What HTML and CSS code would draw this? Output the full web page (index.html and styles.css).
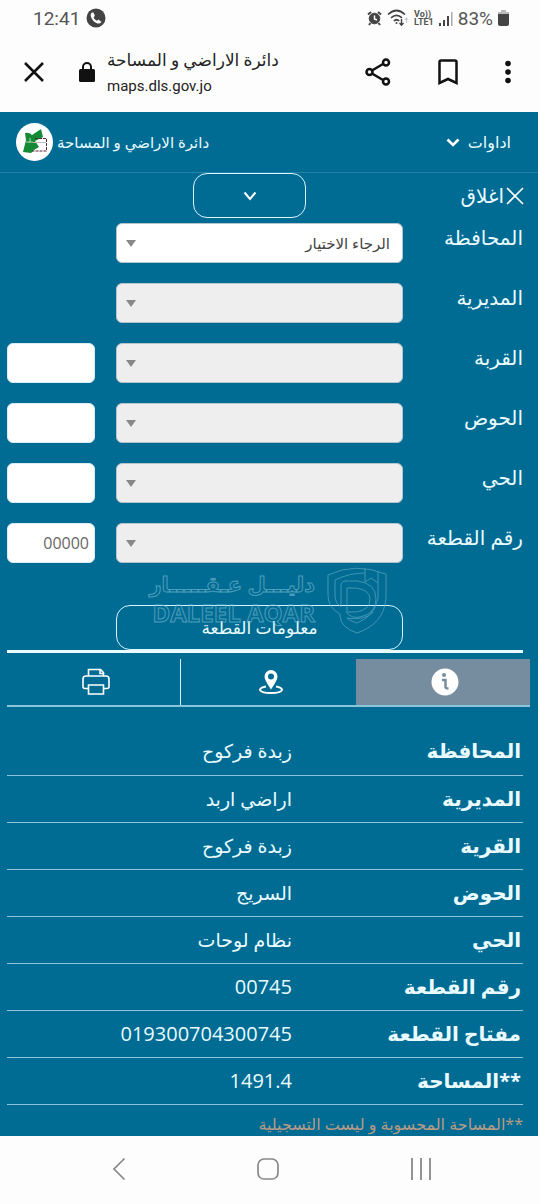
FILE: index.html
```html
<!DOCTYPE html>
<html lang="ar">
<head>
<meta charset="utf-8">
<meta name="viewport" content="width=device-width, initial-scale=1">
<title>دائرة الاراضي و المساحة</title>
<link rel="stylesheet" href="styles.css">
</head>
<body>
<div class="status">
  <div class="group">
    <span class="clock">12:41</span>
    <svg width="20" height="20" viewBox="0 0 20 20"><circle cx="10" cy="10" r="9.5" fill="#444"/><path d="M6 4.500Q4 6 5 9q2 5 6.500 6.500 2.500.5 4-1.500l-3-2.500-1.600 1.200q-2.400-1.200-3.300-3.300L8.800 7.800 7.500 4.500z" fill="#fff"/></svg>
  </div>
  <div class="group indicators">
    <svg width="15" height="16" viewBox="0 0 15 16" fill="none" stroke="#444"><circle cx="7.500" cy="8.500" r="5.300" fill="#444"/><path d="M1 4.500 4 2M14 4.500 11 2M3.500 13 2 15M11.500 13l1.500 2" stroke-width="2"/><path d="M7.500 5.500v3.500l2.500 1" stroke="#fff" stroke-width="1.500"/></svg>
    <svg width="22" height="18" viewBox="0 0 22 18" fill="none" stroke="#444" stroke-width="1.700"><path d="M1 5.500q8.500-8 17 0M4 8.800q5.500-5 11 0M6.800 12q2.700-2.500 5.400 0"/><circle cx="9.500" cy="14" r="1" fill="#444" stroke="none"/><path d="M14.500 10v6m-2-2 2 2.300 2-2.300" stroke-width="1.400"/><path d="M19.500 14v-5m-1.500 2 1.500-2 1.500 2" stroke="#ccc" stroke-width="1.200"/></svg>
    <span class="lte"><span>Vo))</span><span>LTE1</span></span>
    <svg width="14" height="15" viewBox="0 0 14 15"><path d="M0 12h2v3H0zM4 9h2v6H4zM8 5h2v10H8z" fill="#444"/><path d="M12 1h1.500v14H12z" fill="#aaa"/></svg>
    <span class="percent">83%</span>
    <svg width="11" height="16" viewBox="0 0 11 16"><path d="M3 0h5v2h3v3H0V2h3z" fill="#bbb"/><path d="M0 4h11v10q0 2-2 2H2q-2 0-2-2z" fill="#444"/></svg>
  </div>
</div>
<header class="browser">
  <button class="icon" aria-label="إغلاق الصفحة"><svg width="20" height="20" viewBox="0 0 20 20"><path d="M1 1l18 18M19 1 1 19" stroke="#111" stroke-width="2.500"/></svg></button>
  <svg class="lock" width="16" height="20" viewBox="0 0 16 20"><rect y="7" width="16" height="13" rx="1.500" fill="#111"/><path d="M4 8V5a4 4 0 0 1 8 0v3" fill="none" stroke="#111" stroke-width="2"/></svg>
  <div class="address"><span class="page-title" dir="rtl">دائرة الاراضي و المساحة</span><span class="host">maps.dls.gov.jo</span></div>
  <div class="actions">
    <button class="icon" aria-label="مشاركة"><svg width="26" height="28" viewBox="0 0 26 28" fill="none" stroke="#111" stroke-width="2.500"><path d="M7 12.500 18 6M7 15.500 18 22"/><circle cx="4.500" cy="14" r="3"/><circle cx="21" cy="4.500" r="3"/><circle cx="21" cy="23.500" r="3"/></svg></button>
    <button class="icon" aria-label="حفظ"><svg width="20" height="26" viewBox="0 0 20 26"><path d="M1.500 24V3q0-1.500 1.500-1.500h14q1.500 0 1.500 1.500v21L10 20z" fill="none" stroke="#111" stroke-width="2.500"/></svg></button>
    <button class="icon" aria-label="المزيد"><svg width="6" height="24" viewBox="0 0 6 24" fill="#111"><circle cx="3" cy="3.500" r="2.800"/><circle cx="3" cy="12" r="2.800"/><circle cx="3" cy="20.500" r="2.800"/></svg></button>
  </div>
</header>
<main class="app" dir="rtl">
  <div class="topbar">
    <button class="tools">اداوات <svg width="14" height="9" viewBox="0 0 14 9"><path d="M1.500 1.500 7 7l5.500-5.500" fill="none" stroke="#fff" stroke-width="2.600"/></svg></button>
    <div class="brand"><span>دائرة الاراضي و المساحة</span>
      <svg width="37" height="38" viewBox="0 0 37 38"><ellipse cx="18.500" cy="19" rx="18.500" ry="19" fill="#fff"/><path d="M9 10q4-1 7 2l9-6 2 8-8 4 4 6-5 3-3 3-8-1 3-12z" fill="#148a35"/><path d="M10 19h7M14 15v5" stroke="#a8dcb4"/><path d="M19 15.500h11.500V28H16" fill="none" stroke="#522936" stroke-dasharray="3 1"/><path d="M17 19.500h13" stroke="#bbb"/></svg>
    </div>
  </div>
  <div class="closebar">
    <button class="close"><svg width="18" height="18" viewBox="0 0 18 18"><path d="M1 1l16 16M17 1 1 17" stroke="#fff" stroke-width="1.600"/></svg>اغلاق</button>
    <button class="pill" aria-label="طي"><svg width="14" height="10" viewBox="0 0 14 10"><path d="M1.500 1.500 7 8l5.500-6.500" fill="none" stroke="#fff" stroke-width="2"/></svg></button>
  </div>
  <form class="form">
    <div class="row"><label for="gov">المحافظة</label><div class="pick"><select id="gov"><option>الرجاء الاختيار</option></select></div></div>
    <div class="row"><label for="dir">المديرية</label><div class="pick"><select id="dir" disabled></select></div></div>
    <div class="row"><label for="vil">القربة</label><div class="pick"><select id="vil" disabled></select></div><input aria-label="رمز القرية"></div>
    <div class="row"><label for="bas">الحوض</label><div class="pick"><select id="bas" disabled></select></div><input aria-label="رمز الحوض"></div>
    <div class="row"><label for="blk">الحي</label><div class="pick"><select id="blk" disabled></select></div><input aria-label="رمز الحي"></div>
    <div class="row"><label for="par">رقم القطعة</label><div class="pick"><select id="par" disabled></select></div><input aria-label="رقم القطعة" placeholder="00000"></div>
    <div class="submit"><button type="button" class="pill">معلومات القطعة</button>
      <div class="watermark" aria-hidden="true">
        <svg width="60" height="68" viewBox="0 0 60 68" fill="none" stroke="#6fb0c8"><path d="M1 8Q28-5 59 7v24q-2 26-29 35-16-5-17-17v-2Q1 41 1 28zM38 1v14l6-4 7 5V5M38 6Q22 6 8 13v17q0 6 6 10V19q0-5 5-5h11q19 2 19 18 0 15-16 18-8 2-14-5M51 16v15q-3 18-21 25-7-2-10-5 18 3 26-6M20 21v24h9q14-2 14-13 0-9-14-11z"/></svg>
        <div class="mark-text"><span class="mark-ar">دليـــل عـقـــــار</span><span class="mark-en">DALEEL AQAR</span></div>
      </div>
    </div>
  </form>
  <nav class="tabs">
    <button class="tab active" aria-label="معلومات"><svg width="28" height="28" viewBox="0 0 28 28"><circle cx="14" cy="14" r="13.500" fill="#fff"/><circle cx="13" cy="7" r="2" fill="#758d9e"/><path d="M11 12h3.500v7q0 1.500 3 1.500" fill="none" stroke="#758d9e" stroke-width="2.500"/></svg></button>
    <button class="tab" aria-label="الموقع"><svg width="28" height="28" viewBox="0 0 28 28"><path d="M9 18.500Q3 19.500 3 22 4 25 14 25t11-3Q25 19.500 19 18.500" fill="none" stroke="#fff" stroke-width="2"/><path fill-rule="evenodd" d="M14 21.500Q7.500 12 7.500 8.500a6.500 6.500 0 0 1 13 0q0 3.500-6.500 13zM14 5.500a3 3 0 1 0 0 6 3 3 0 0 0 0-6z" fill="#fff"/></svg></button>
    <button class="tab" aria-label="طباعة"><svg width="28" height="28" viewBox="0 0 28 28" fill="none" stroke="#fff" stroke-width="1.600"><path d="M6.500 8V1.500h12l3 3V8M18 2v3.500h3.500M6.500 20.500H3q-2 0-2-2V11q0-3 3-3h20q3 0 3 3v7.500q0 2-2 2h-3.500M6.500 17h15v9h-15z"/></svg></button>
  </nav>
  <table class="info">
    <tr><th scope="row">المحافظة</th><td>زبدة فركوح</td></tr>
    <tr><th scope="row">المديرية</th><td>اراضي اربد</td></tr>
    <tr><th scope="row">القرية</th><td>زبدة فركوح</td></tr>
    <tr><th scope="row">الحوض</th><td>السريج</td></tr>
    <tr><th scope="row">الحي</th><td>نظام لوحات</td></tr>
    <tr><th scope="row">رقم القطعة</th><td class="num">00745</td></tr>
    <tr><th scope="row">مفتاح القطعة</th><td class="num">019300704300745</td></tr>
    <tr><th scope="row">**المساحة</th><td class="num">1491.4</td></tr>
  </table>
  <p class="note">**المساحة المحسوبة و ليست التسجيلية</p>
</main>
<footer class="system">
  <button class="icon" aria-label="رجوع"><svg width="14" height="24" viewBox="0 0 14 24"><path d="M12.500 1.500 2 12l10.500 10.500" fill="none" stroke="#888" stroke-width="1.700"/></svg></button>
  <button class="icon" aria-label="الرئيسية"><svg width="22" height="22" viewBox="0 0 22 22"><rect x="1" y="1" width="20" height="20" rx="6" fill="none" stroke="#888" stroke-width="1.700"/></svg></button>
  <button class="icon" aria-label="التطبيقات"><svg width="22" height="22" viewBox="0 0 22 22"><path d="M2 0v22M11 0v22M20 0v22" stroke="#888" stroke-width="1.800"/></svg></button>
</footer>
</body>
</html>
```
FILE: styles.css
```css
* { box-sizing: border-box; }
body { margin: 0; background: #fdfdfd; color: #222; font-family: Roboto, "DejaVu Sans", sans-serif; }
button { border: 0; padding: 0; background: none; color: inherit; font: inherit; }
svg { display: block; flex: none; }
.status { display: flex; justify-content: space-between; align-items: center; height: 36px; padding: 0 31px 0 33px; color: #555; }
.group { display: flex; align-items: center; gap: 6px; }
.indicators { gap: 5px; }
.clock, .percent { font-size: 19px; }
.lte { display: flex; flex-direction: column; font-size: 9px; line-height: 8px; font-weight: 700; }
.browser { display: flex; align-items: center; height: 76px; padding: 0 29px 4px 24px; }
.lock { margin: 0 12px 0 35px; }
.address { display: flex; flex-direction: column; align-items: flex-start; white-space: nowrap; }
.page-title { font-size: 17px; line-height: 28px; }
.host { font-size: 15px; line-height: 24px; }
.actions { display: flex; align-items: center; gap: 47px; margin-left: auto; }
.app { margin-right: 2px; background: #006c94; color: #e9fbff; font-family: "Open Sans", "DejaVu Sans", sans-serif; overflow: hidden; }
.topbar { display: flex; justify-content: space-between; align-items: center; height: 61px; padding: 0 27px 0 16px; border-bottom: 1px solid #2480a4; font-size: 15px; }
.tools, .brand { display: flex; align-items: center; gap: 4px; }
.tools { gap: 8px; font-size: 16px; }
.closebar { display: grid; grid-template-columns: 1fr 113px 193px; padding-right: 14px; align-items: center; }
.close { display: flex; align-items: center; justify-self: start; gap: 2px; font-size: 20px; line-height: 30px; }
.pill { height: 45px; border: 1px solid #d8f4ff; border-radius: 14px; display: grid; place-items: center; }
.form { padding: 5px 15px 0 7px; border-bottom: 3px solid #e9fbff; }
.form { border-image: linear-gradient(to right, transparent 7px, #e9fbff 7px calc(100% - 15px), transparent calc(100% - 15px)) 0 0 3 0; }
.row { display: grid; grid-template-columns: 120px 1fr 88px; align-items: start; height: 60px; }
.row label { font-size: 20px; line-height: 30px; white-space: nowrap; }
.pick { position: relative; margin-left: 21px; }
.pick::after { content: ""; position: absolute; left: 10px; top: 17px; border: 5px solid transparent; border-top: 7px solid #888; border-bottom: 0; }
select, input { appearance: none; display: block; width: 100%; height: 40px; border: 1px solid #b4c5cc; border-radius: 6px; background: #fff; color: #444; font: 15px "Open Sans", "DejaVu Sans", sans-serif; padding: 0 12px; opacity: 1; }
select:disabled { background: #eee; opacity: 1; }
input { border-color: #d9ecf4; padding: 0 5px; font-size: 16px; }
input::placeholder { color: #666; text-align: right; }
.submit { position: relative; padding: 22px 120px 0 109px; }
.submit .pill { width: 100%; font-size: 17px; }
.watermark { position: absolute; right: 136px; top: -16px; display: flex; gap: 12px; opacity: .6; }
.mark-text { display: flex; flex-direction: column; color: transparent; -webkit-text-stroke: 1px #80bdd2; font-weight: 700; white-space: nowrap; }
.mark-ar { font-size: 21px; line-height: 34px; }
.mark-en { font-size: 24px; line-height: 24px; }
.tabs { display: grid; grid-template-columns: repeat(3, 1fr); margin: 6px 8px 0 7px; height: 48px; border-bottom: 2px solid #8bc5da; }
.tab { display: grid; place-items: center; padding-left: 4px; }
.tab.active { background: #758d9e; }
.tab:last-child { border-right: 1px solid #d8f4ff; }
.info { width: calc(100% - 22px); margin: 21px 15px 0 7px; border-collapse: collapse; table-layout: fixed; }
.info th, .info td { height: 47px; padding: 0 2px 0 0; border-bottom: 1px solid #8bc5da; text-align: right; font-size: 20px; line-height: 24px; font-weight: 400; }
.info td { font-size: 19px; }
.info .num { font-size: 20px; }
.info th { width: 229px; font-weight: 700; }
.note { margin: 0; padding: 4px 15px 0 0; height: 31px; font-size: 16px; line-height: 30px; color: #b99a85; }
.system { display: flex; justify-content: space-between; align-items: center; height: 66px; padding: 0 108px 0 112px; }
```
